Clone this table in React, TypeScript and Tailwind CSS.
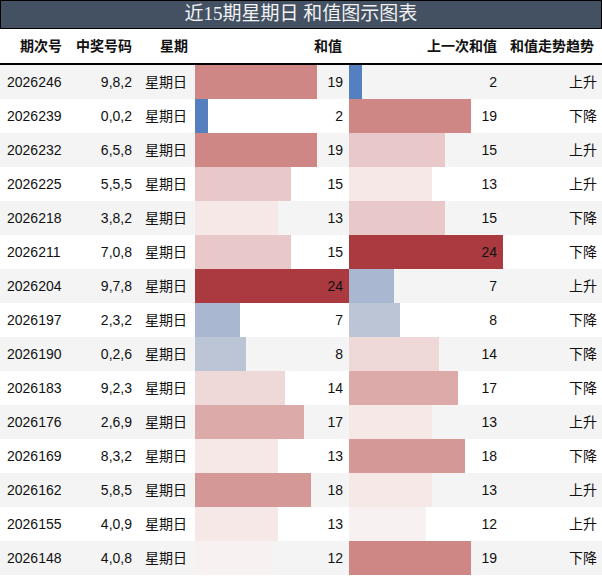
import React from 'react';

interface Row {
  period: string;
  numbers: string;
  sum: number;
  prev: number;
  trend: '上升' | '下降';
}

const rows: Row[] = [
  { period: '2026246', numbers: '9,8,2', sum: 19, prev: 2, trend: '上升' },
  { period: '2026239', numbers: '0,0,2', sum: 2, prev: 19, trend: '下降' },
  { period: '2026232', numbers: '6,5,8', sum: 19, prev: 15, trend: '上升' },
  { period: '2026225', numbers: '5,5,5', sum: 15, prev: 13, trend: '上升' },
  { period: '2026218', numbers: '3,8,2', sum: 13, prev: 15, trend: '下降' },
  { period: '2026211', numbers: '7,0,8', sum: 15, prev: 24, trend: '下降' },
  { period: '2026204', numbers: '9,7,8', sum: 24, prev: 7, trend: '上升' },
  { period: '2026197', numbers: '2,3,2', sum: 7, prev: 8, trend: '下降' },
  { period: '2026190', numbers: '0,2,6', sum: 8, prev: 14, trend: '下降' },
  { period: '2026183', numbers: '9,2,3', sum: 14, prev: 17, trend: '下降' },
  { period: '2026176', numbers: '2,6,9', sum: 17, prev: 13, trend: '上升' },
  { period: '2026169', numbers: '8,3,2', sum: 13, prev: 18, trend: '下降' },
  { period: '2026162', numbers: '5,8,5', sum: 18, prev: 13, trend: '上升' },
  { period: '2026155', numbers: '4,0,9', sum: 13, prev: 12, trend: '上升' },
  { period: '2026148', numbers: '4,0,8', sum: 12, prev: 19, trend: '下降' },
];

const MAX = 24;

// diverging scale, blue for low sums, red for high
const barColor: Record<number, string> = {
  2: '#5580bf',
  7: '#a9b8d0',
  8: '#bcc5d5',
  12: '#f8f1f1',
  13: '#f5e8e7',
  14: '#efd8d8',
  15: '#e8c8c8',
  17: '#dcaaa8',
  18: '#d49896',
  19: '#ce8785',
  24: '#ab3a40',
};

const BarCell: React.FC<{ value: number }> = ({ value }) => (
  <div className="relative h-full">
    <div
      className="absolute left-0 top-0 h-full"
      style={{ width: `${(value / MAX) * 100}%`, backgroundColor: barColor[value] }}
    />
    <div className="relative flex h-full items-center justify-end pr-[6px]">{value}</div>
  </div>
);

export default function App() {
  return (
    <div
      className="w-[602px] h-[576px] bg-white text-[14px] text-[#111]"
      style={{ fontFamily: '"Liberation Sans", "Noto Sans CJK SC", sans-serif' }}
    >
      <div
        className="h-[29px] border border-black bg-[#435163] text-[#f2f2f2] text-[19px] flex items-center justify-center"
        style={{ fontFamily: '"Liberation Serif", "Noto Sans CJK SC", serif' }}
      >
        近15期星期日 和值图示图表
      </div>

      <div className="grid grid-cols-[69px_69px_57px_154px_154px_99px] h-[36px] border-b-2 border-black font-bold">
        <div className="flex items-center justify-end pr-[7px]">期次号</div>
        <div className="flex items-center justify-end pr-[6px]">中奖号码</div>
        <div className="flex items-center justify-end pr-[7px]">星期</div>
        <div className="flex items-center justify-end pr-[7px]">和值</div>
        <div className="flex items-center justify-end pr-[6px]">上一次和值</div>
        <div className="flex items-center justify-end pr-[8px]">和值走势趋势</div>
      </div>

      {rows.map((r, i) => (
        <div
          key={r.period}
          className={`grid grid-cols-[69px_69px_57px_154px_154px_99px] h-[34px] ${i % 2 === 0 ? 'bg-[#f4f4f4]' : 'bg-white'}`}
        >
          <div className="flex items-center pl-[7px]">{r.period}</div>
          <div className="flex items-center justify-end pr-[6px]">{r.numbers}</div>
          <div className="flex items-center justify-end pr-[8px]">星期日</div>
          <BarCell value={r.sum} />
          <BarCell value={r.prev} />
          <div className="flex items-center justify-end pr-[5px]">{r.trend}</div>
        </div>
      ))}
    </div>
  );
}
